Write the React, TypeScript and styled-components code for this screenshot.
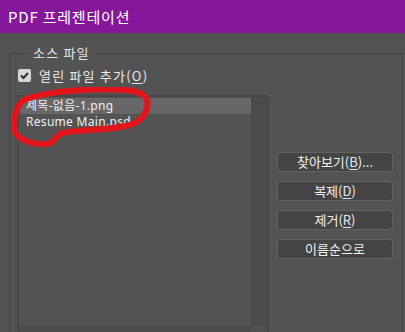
import styled, { createGlobalStyle } from "styled-components";

const GlobalStyle = createGlobalStyle`
    html, body {
        margin: 0;
        padding: 0;
        background: #535353;
        overflow: hidden;
    }
    body {
        font-family: "Noto Sans", "Noto Sans CJK KR", sans-serif;
        color: #e6e6e6;
    }
`;

const Window = styled.div`
    width: 405px;
    height: 332px;
    background: #535353;
    overflow: hidden;
`;

const TitleBar = styled.div`
    height: 33px;
    background: #86179a;
    display: flex;
    align-items: center;
    padding-left: 8px;
    font-family: "Noto Sans CJK KR", "Noto Sans", sans-serif;
    font-size: 15px;
    letter-spacing: 0.8px;
    color: #ffffff;
`;

const Group = styled.div`
    position: relative;
    margin: 20px 2px 0 9px;
    border: 1px solid #434343;
    padding: 13px 0 0 7px;
    height: 300px;
`;

const GroupLabel = styled.span`
    position: absolute;
    top: -10px;
    left: 19px;
    padding: 0 4px;
    background: #535353;
    font-family: "Noto Sans CJK KR", sans-serif;
    font-size: 13px;
    letter-spacing: 1.2px;
    line-height: 18px;
    color: #e6e6e6;
`;

const CheckRow = styled.label`
    display: flex;
    align-items: center;
    height: 16px;
    gap: 8px;
    font-family: "Noto Sans CJK KR", sans-serif;
    font-size: 13px;
    letter-spacing: 1.2px;
    color: #ececec;
`;

const Box = styled.span`
    width: 13px;
    height: 13px;
    margin-left: 1px;
    border-radius: 2px;
    background: #d6d6d6;
    display: flex;
    align-items: center;
    justify-content: center;
`;

const Key = styled.span`
    text-decoration: underline;
    text-underline-offset: 2px;
    color: #dfe8f5;
`;

const Body = styled.div`
    display: flex;
    gap: 8px;
    margin-top: 12px;
`;

const ListBox = styled.div`
    position: relative;
    width: 248px;
    height: 243px;
    border: 2px solid #474747;
    display: grid;
    grid-template-columns: 232px 16px;
    grid-template-rows: 1fr 15px;
    background: #535353;
`;

const Items = styled.div`
    padding: 1px 0 0 1px;
    display: flex;
    flex-direction: column;
`;

const Item = styled.div<{ $selected?: boolean }>`
    height: 16px;
    line-height: 16px;
    padding-left: 6px;
    font-size: 12px;
    letter-spacing: 0.3px;
    color: #f0f0f0;
    background: ${(p) => (p.$selected ? "#676767" : "transparent")};
    font-family: "Noto Sans", "Noto Sans CJK KR", sans-serif;
    white-space: nowrap;
`;

const VScroll = styled.div`
    background: #4b4b4b;
`;

const HScroll = styled.div`
    background: #4c4c4c;
`;

const Corner = styled.div`
    background: #505050;
`;

const Scribble = styled.svg`
    position: absolute;
    left: -8px;
    top: -10px;
    pointer-events: none;
`;

const Buttons = styled.div`
    display: flex;
    flex-direction: column;
    gap: 9px;
    margin-top: 57px;
`;

const Button = styled.button`
    width: 116px;
    height: 20px;
    padding: 0;
    border: 1px solid #626262;
    border-radius: 3px;
    background: #444444;
    color: #f2f2f2;
    font-family: "Noto Sans CJK KR", "Noto Sans", sans-serif;
    font-size: 13px;
    line-height: 18px;
    display: flex;
    align-items: center;
    justify-content: center;
`;

export default function App() {
    return (
        <Window>
            <GlobalStyle />
            <TitleBar>PDF 프레젠테이션</TitleBar>
            <Group>
                <GroupLabel>소스 파일</GroupLabel>
                <CheckRow>
                    <Box>
                        <svg width="11" height="11" viewBox="0 0 11 11">
                            <polyline
                                points="2,5.5 4.5,8 9,3"
                                fill="none"
                                stroke="#2e2e2e"
                                strokeWidth="2"
                            />
                        </svg>
                    </Box>
                    <span>
                        열린 파일 추가(<Key>O</Key>)
                    </span>
                </CheckRow>
                <Body>
                    <ListBox>
                        <Items>
                            <Item $selected>제목-없음-1.png</Item>
                            <Item>Resume Main.psd</Item>
                        </Items>
                        <VScroll />
                        <HScroll />
                        <Corner />
                        <Scribble width="150" height="70" viewBox="0 0 150 70">
                            <path
                                d="M 13 13 C 40 2, 110 -1, 129 6 C 141 11, 138 28, 124 36 C 105 44, 70 42, 52 46 C 44 48, 44 56, 36 57 C 20 58, 3 52, 3 40 C 3 28, 6 18, 13 13"
                                fill="none"
                                stroke="#e3151b"
                                strokeWidth="6"
                                strokeLinecap="round"
                            />
                        </Scribble>
                    </ListBox>
                    <Buttons>
                        <Button>
                            찾아보기(<Key>B</Key>)...
                        </Button>
                        <Button>
                            복제(<Key>D</Key>)
                        </Button>
                        <Button>
                            제거(<Key>R</Key>)
                        </Button>
                        <Button>이름순으로</Button>
                    </Buttons>
                </Body>
            </Group>
        </Window>
    );
}
